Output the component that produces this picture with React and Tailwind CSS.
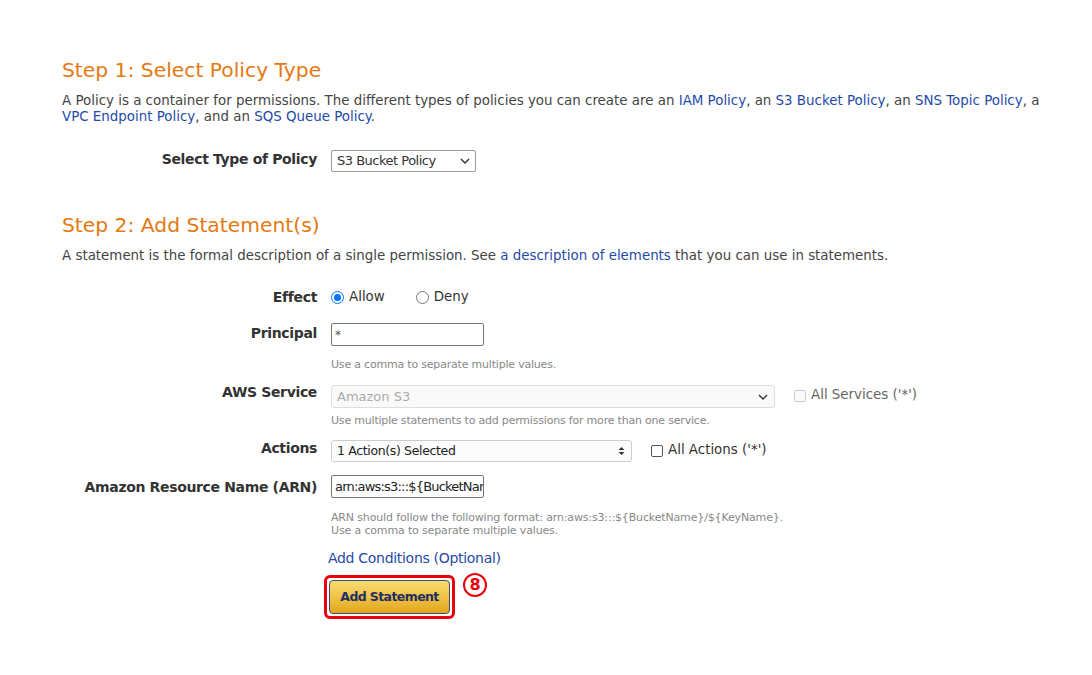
import React, { useState } from 'react'

// ── Small helpers ─────────────────────────────────────────────────────────────
function Row({ label, children, className = '' }) {
  return (
    <div className={`flex items-start ${className}`}>
      <div className="w-[269px] shrink-0 text-right font-bold text-[14px] text-[#333] pr-[14px] leading-[18px] tracking-[-0.35px]">{label}</div>
      <div className="flex-1">{children}</div>
    </div>
  )
}

function Help({ children, className = 'mt-[10px]' }) {
  return <div className={`text-[11px] leading-[13px] text-[#888] tracking-[-0.2px] ${className}`}>{children}</div>
}

function Chevron() {
  return (
    <svg width="10" height="6" viewBox="0 0 10 6" className="shrink-0">
      <path d="M1 1l4 4 4-4" fill="none" stroke="#333" strokeWidth="1.4" />
    </svg>
  )
}

function Link({ children }) {
  return <span className="text-[#1f4aa8]">{children}</span>
}

function Radio({ checked, label, onClick, className = '' }) {
  return (
    <label className={`flex items-center gap-[5px] cursor-pointer ${className}`} onClick={onClick}>
      <span className={`w-[13px] h-[13px] rounded-full border flex items-center justify-center ${checked ? 'border-[#0075ff]' : 'border-[#767676]'}`}>
        {checked && <span className="w-[7px] h-[7px] rounded-full bg-[#0075ff]" />}
      </span>
      {label}
    </label>
  )
}

// ════════════════════════════════════════════════════════════════════════════
export default function App() {
  const [effect, setEffect] = useState('allow')

  return (
    <div className="w-[1092px] h-[675px] bg-white text-[#444] font-['DejaVu_Sans',Verdana,sans-serif] overflow-hidden">
      <div className="pl-[62px] pr-[40px] pt-[57px]">

        {/* ── Step 1 ── */}
        <h2 className="text-[20.3px] leading-[26px] text-[#e47911]">Step 1: Select Policy Type</h2>
        <p className="text-[13.4px] leading-[16px] mt-[10px]">
          A Policy is a container for permissions. The different types of policies you can create are an <Link>IAM Policy</Link>, an <Link>S3 Bucket Policy</Link>, an <Link>SNS Topic Policy</Link>, a <Link>VPC Endpoint Policy</Link>, and an <Link>SQS Queue Policy</Link>.
        </p>

        <Row label="Select Type of Policy" className="mt-[25px]">
          <div className="w-[145px] h-[22px] border border-[#999] rounded-[2px] flex items-center justify-between px-[5px] text-[13px] text-[#333] tracking-[-0.5px]">
            <span>S3 Bucket Policy</span>
            <Chevron />
          </div>
        </Row>

        {/* ── Step 2 ── */}
        <h2 className="text-[20.3px] leading-[26px] text-[#e47911] mt-[40px]">Step 2: Add Statement(s)</h2>
        <p className="text-[13.4px] leading-[16px] mt-[10px]">
          A statement is the formal description of a single permission. See <Link>a description of elements</Link> that you can use in statements.
        </p>

        <Row label="Effect" className="mt-[24px]">
          <div className="flex items-center text-[13.4px] leading-[18px] text-[#333]">
            <Radio checked={effect === 'allow'} label="Allow" onClick={() => setEffect('allow')} />
            <Radio checked={effect === 'deny'} label="Deny" onClick={() => setEffect('deny')} className="ml-[31px]" />
          </div>
        </Row>

        <Row label="Principal" className="mt-[18px]">
          <input readOnly value="*" className="block w-[153px] h-[23px] border border-[#767676] rounded-[2px] px-[3px] text-[12px] text-[#555] outline-none mt-[-1px]" />
          <Help className="mt-[12px]">Use a comma to separate multiple values.</Help>
        </Row>

        <Row label="AWS Service" className="mt-[12px]">
          <div className="flex items-center">
            <div className="w-[444px] h-[23px] border border-[#ddd] rounded-[3px] bg-[#fafafa] flex items-center justify-between pl-[5px] pr-[6px] text-[13px] text-[#aaa] mt-[2px]">
              <span>Amazon S3</span>
              <Chevron />
            </div>
            <span className="w-[12px] h-[12px] border border-[#ccc] rounded-[2px] bg-[#fafafa] ml-[19px]" />
            <span className="ml-[5px] text-[13.4px] text-[#666]">All Services ('*')</span>
          </div>
          <Help className="mt-[6px]">Use multiple statements to add permissions for more than one service.</Help>
        </Row>

        <Row label="Actions" className="mt-[12px]">
          <div className="flex items-center">
            <div className="w-[301px] h-[22px] border border-[#ccc] rounded-[3px] bg-[#fcfcfc] flex items-center justify-between pl-[5px] pr-[6px] text-[12.5px] text-[#222] tracking-[-0.35px] mt-[1px]">
              <span>1 Action(s) Selected</span>
              <svg width="7" height="10" viewBox="0 0 7 10"><path d="M0.5 4L3.5 1 6.5 4z M0.5 6L3.5 9 6.5 6z" fill="#333" /></svg>
            </div>
            <span className="w-[12px] h-[12px] border border-[#555] rounded-[2px] ml-[19px]" />
            <span className="ml-[5px] text-[13.4px] text-[#333]">All Actions ('*')</span>
          </div>
        </Row>

        <Row label="Amazon Resource Name (ARN)" className="mt-[16px]">
          <input
            readOnly
            value="arn:aws:s3:::${BucketName}/${KeyName}"
            className="block w-[153px] h-[23px] border border-[#767676] rounded-[2px] pl-[3px] pr-0 text-[13px] text-[#222] tracking-[-0.8px] outline-none mt-[-3px]"
          />
          <div className="text-[11px] leading-[13px] text-[#888] tracking-[-0.15px] mt-[13px]">
            ARN should follow the following format: arn:aws:s3:::${'{'}BucketName{'}'}/${'{'}KeyName{'}'}.<br />
            Use a comma to separate multiple values.
          </div>
        </Row>

        {/* ── Submit ── */}
        <div className="pl-[266px] mt-[12px]">
          <div className="text-[14px] leading-[18px] text-[#1f4aa8] tracking-[-0.3px]">Add Conditions (Optional)</div>
          <div className="flex items-start mt-[8px] ml-[-4px]">
            <div className="border-[3px] border-[#e8000b] rounded-[6px] p-[2px]">
              <button className="w-[121px] h-[34px] rounded-[4px] border border-[#3a4a7a] bg-gradient-to-b from-[#fbdc6e] to-[#e2a70f] text-[12.5px] font-bold text-[#1e2f60] tracking-[-0.6px]">
                Add Statement
              </button>
            </div>
            <div className="ml-[8px] mt-[-2px] w-[24px] h-[24px] rounded-full border-[2px] border-[#e8000b] flex items-center justify-center text-[#e8000b] font-bold text-[16px] leading-none">8</div>
          </div>
        </div>

      </div>
    </div>
  )
}
